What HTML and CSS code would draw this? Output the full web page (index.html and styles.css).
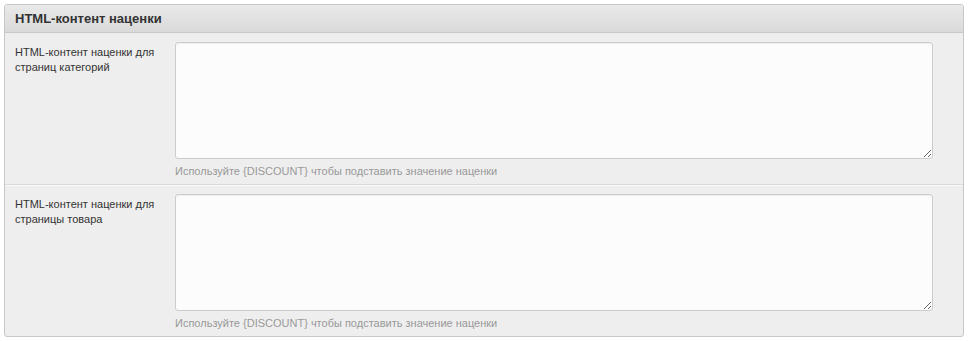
FILE: index.html
```html
<!DOCTYPE html>
<html lang="ru">
  <head>
    <meta charset="utf-8">
    <title>HTML-контент наценки</title>
    <link rel="stylesheet" href="styles.css">
  </head>
  <body>
    <div class="panel">
      <div class="panel-head">HTML-контент наценки</div>

      <div class="field-row">
        <label class="field-label" for="catHtml">HTML-контент наценки для страниц категорий</label>
        <div class="field-control">
          <textarea id="catHtml" class="field-text"></textarea>
          <div class="field-hint">Используйте {DISCOUNT} чтобы подставить значение наценки</div>
        </div>
      </div>

      <div class="field-row">
        <label class="field-label" for="prodHtml">HTML-контент наценки для страницы товара</label>
        <div class="field-control">
          <textarea id="prodHtml" class="field-text"></textarea>
          <div class="field-hint">Используйте {DISCOUNT} чтобы подставить значение наценки</div>
        </div>
      </div>
    </div>
  </body>
</html>
```

FILE: styles.css
```css
body {
  margin: 4px;
  background-color: #fff;
  font-family: "Liberation Sans", Arial, sans-serif;
  color: #333;
}

.panel
{
  border: 1px solid #c8c8c8;
  border-radius: 3px;
  background-color: #eeeeee;
  overflow: hidden;
}

.panel-head
{
  height: 27px;
  line-height: 27px;
  padding-left: 10px;
  font-size: 13px;
  font-weight: bold;
  color: #333;
  background: linear-gradient(#e9e9e9, #dadada);
  border-bottom: 1px solid #c8c8c8;
}

.field-row
{
  display: flex;
  padding: 9px 30px 5px 10px;
  border-bottom: 1px solid #d8d8d8;
  box-shadow: 0 1px 0 #f8f8f8;
}

.field-row:last-child
{
  border-bottom: none;
  box-shadow: none;
}

.field-label
{
  width: 160px;
  flex-shrink: 0;
  padding-top: 3px;
  padding-right: 10px;
  box-sizing: border-box;
  font-size: 11px;
  line-height: 15px;
  color: #333;
}

.field-control
{
  flex: 1;
  display: flex;
  flex-direction: column;
}

.field-text
{
  display: block;
  height: 117px;
  margin: 0;
  box-sizing: border-box;
  border: 1px solid #cccccc;
  border-radius: 3px;
  background-color: #fcfcfc;
  box-shadow: inset 0 1px 1px rgba(0, 0, 0, 0.06);
  font-family: "Liberation Sans", Arial, sans-serif;
  font-size: 12px;
}

.field-hint
{
  margin-top: 4px;
  font-size: 11px;
  line-height: 16px;
  color: #999;
}
```
